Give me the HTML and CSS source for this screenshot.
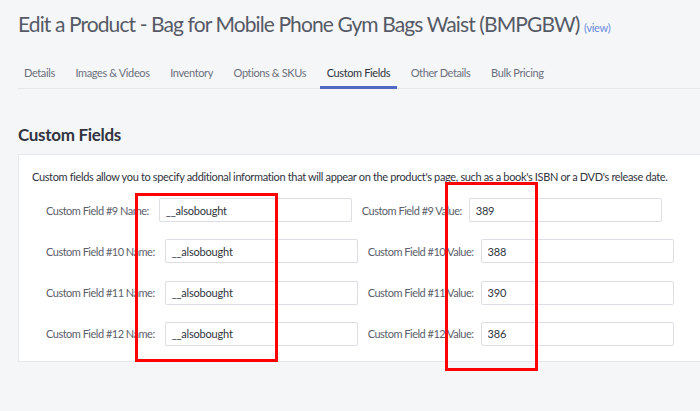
FILE: index.html
```html
<!DOCTYPE html>
<html>
<head>
<meta charset="utf-8">
<link rel="stylesheet" href="styles.css">
</head>
<body>
<div class="page">
  <h1 class="title">Edit a Product - Bag for Mobile Phone Gym Bags Waist (BMPGBW) <a class="view" href="#">(view)</a></h1>
  <nav class="tabs">
    <span class="tab">Details</span>
    <span class="tab">Images &amp; Videos</span>
    <span class="tab">Inventory</span>
    <span class="tab">Options &amp; SKUs</span>
    <span class="tab active">Custom Fields</span>
    <span class="tab">Other Details</span>
    <span class="tab">Bulk Pricing</span>
  </nav>
  <h2 class="section-title">Custom Fields</h2>
  <div class="panel">
    <p class="desc">Custom fields allow you to specify additional information that will appear on the product's page, such as a book's ISBN or a DVD's release date.</p>
    <div class="rows">
      <div class="row">
        <label class="lbl">Custom Field #9 Name:</label>
        <input class="field" value="__alsobought">
        <label class="lbl val-lbl">Custom Field #9 Value:</label>
        <input class="field" value="389">
      </div>
      <div class="row">
        <label class="lbl">Custom Field #10 Name:</label>
        <input class="field" value="__alsobought">
        <label class="lbl val-lbl">Custom Field #10 Value:</label>
        <input class="field" value="388">
      </div>
      <div class="row">
        <label class="lbl">Custom Field #11 Name:</label>
        <input class="field" value="__alsobought">
        <label class="lbl val-lbl">Custom Field #11 Value:</label>
        <input class="field" value="390">
      </div>
      <div class="row">
        <label class="lbl">Custom Field #12 Name:</label>
        <input class="field" value="__alsobought">
        <label class="lbl val-lbl">Custom Field #12 Value:</label>
        <input class="field" value="386">
      </div>
    </div>
  </div>
  <div class="mark mark-names"></div>
  <div class="mark mark-values"></div>
</div>
</body>
</html>
```
FILE: styles.css
```css
html {
  overflow: hidden;
  background: #f5f6f8;
}
body {
  margin: 0;
  padding: 0;
  min-height: 411px;
  background: #f5f6f8;
  font-family: Lato, "Open Sans", sans-serif;
  color: #313440;
}
.page {
  position: relative;
  width: 760px;
  min-height: 400px;
  padding: 9px 0 0 18px;
}
.title {
  margin: 0;
  font-size: 21px;
  font-weight: 400;
  line-height: 30px;
  letter-spacing: -0.9px;
  color: #555a66;
  white-space: nowrap;
}
.view {
  font-size: 11px;
  letter-spacing: -0.3px;
  color: #6a8ae0;
  text-decoration: none;
}
.tabs {
  display: flex;
  margin-top: 23px;
  border-bottom: 1px solid #e4e6ea;
}
.tab {
  padding: 0 7px 6px;
  margin-right: 6.6px;
  margin-bottom: -1px;
  font-size: 11px;
  line-height: 14px;
  letter-spacing: -0.38px;
  color: #6c707c;
  border-bottom: 3px solid transparent;
}
.tab:first-child {
  margin-left: -1px;
}
.tab.active {
  color: #313440;
  border-bottom-color: #4f6ac0;
}
.section-title {
  margin: 35px 0 0;
  font-size: 17px;
  font-weight: 700;
  line-height: 22px;
  letter-spacing: -0.3px;
  color: #313440;
}
.panel {
  margin-top: 8px;
  background: #fff;
  border: 1px solid #e6e8ec;
  padding: 14px 0 15px 13px;
}
.desc {
  margin: 0;
  font-size: 11px;
  line-height: 16px;
  letter-spacing: -0.35px;
  color: #313440;
  white-space: nowrap;
}
.rows {
  margin-top: 13px;
  padding-left: 14px;
  display: flex;
  flex-direction: column;
  gap: 17.3px;
}
.row {
  display: flex;
  align-items: center;
  gap: 10px;
}
.lbl {
  font-size: 11px;
  letter-spacing: -0.5px;
  color: #5c606b;
  white-space: nowrap;
}
.val-lbl {
  margin-right: -3px;
}
.field {
  box-sizing: border-box;
  width: 193px;
  height: 24px;
  border: 1px solid #dcdee3;
  border-radius: 2px;
  padding: 0 6px;
  font-family: Lato, "Open Sans", sans-serif;
  font-size: 11px;
  letter-spacing: -0.2px;
  color: #313440;
  background: #fff;
}
.mark {
  position: absolute;
  border: 3px solid #ff0000;
  box-sizing: border-box;
}
.mark-names {
  left: 135px;
  top: 193px;
  width: 143px;
  height: 169px;
}
.mark-values {
  left: 445px;
  top: 182px;
  width: 93px;
  height: 189px;
}
```
